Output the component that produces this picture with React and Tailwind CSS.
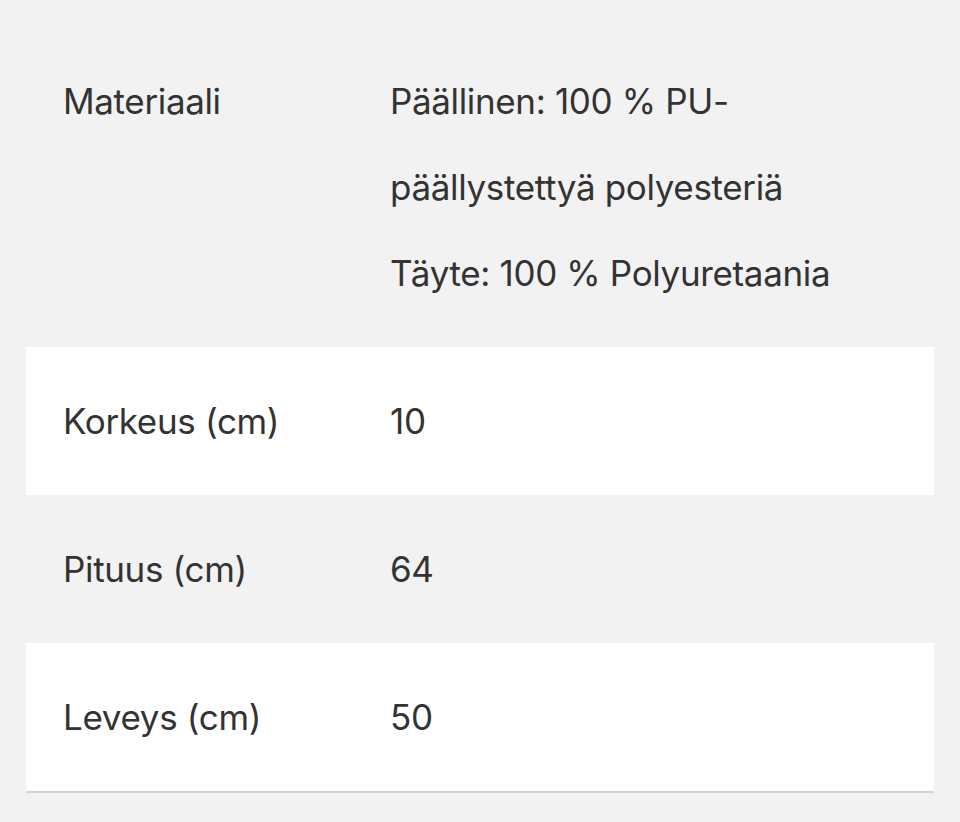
const rows = [
  { label: 'Materiaali', values: ['Päällinen: 100 % PU-päällystettyä polyesteriä', 'Täyte: 100 % Polyuretaania'] },
  { label: 'Korkeus (cm)', values: ['10'] },
  { label: 'Pituus (cm)', values: ['64'] },
  { label: 'Leveys (cm)', values: ['50'] },
]

export default function App() {
  return (
    <div className="min-h-[822px] bg-[#f2f2f2] px-[26px] pt-[27px] text-[35px] leading-[86px] tracking-[-0.01em] text-[#333333]" style={{ fontFamily: 'Inter, "Noto Sans", sans-serif' }}>
      <div className="border-b-2 border-[#d2d2d2]">
        {rows.map((row, i) => (
          <div key={row.label} className={`flex py-[31px] pl-[37px] ${i % 2 === 1 ? 'bg-white' : ''}`}>
            <div className="w-[327px] shrink-0">{row.label}</div>
            <div className="w-[470px]">
              {row.values.map((v) => (
                <p key={v}>{v}</p>
              ))}
            </div>
          </div>
        ))}
      </div>
    </div>
  )
}
